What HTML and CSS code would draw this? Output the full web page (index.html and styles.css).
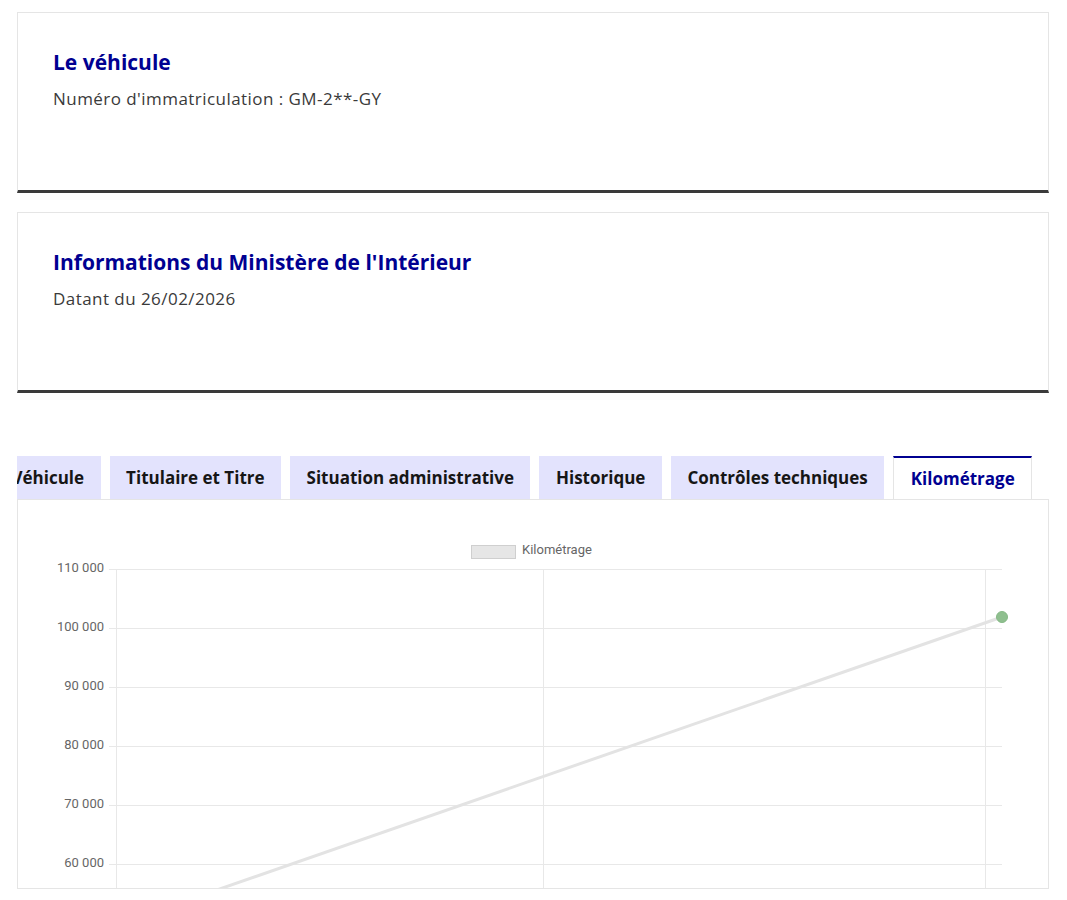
FILE: index.html
```html
<!DOCTYPE html>
<html lang="fr">
<head>
<meta charset="utf-8">
<title>Kilométrage</title>
<link rel="stylesheet" href="styles.css">
</head>
<body>
<main class="page">
  <section class="card">
    <h2 class="card-title">Le véhicule</h2>
    <p class="card-desc">Numéro d'immatriculation : GM-2**-GY</p>
  </section>
  <section class="card">
    <h2 class="card-title">Informations du Ministère de l'Intérieur</h2>
    <p class="card-desc">Datant du 26/02/2026</p>
  </section>

  <div class="tabs">
    <div class="tab-scroll">
      <ul class="tab-list">
        <li class="tab">Véhicule</li>
        <li class="tab">Titulaire et Titre</li>
        <li class="tab">Situation administrative</li>
        <li class="tab">Historique</li>
        <li class="tab">Contrôles techniques</li>
        <li class="tab tab-active">Kilométrage</li>
      </ul>
    </div>
    <div class="tab-panel">
      <svg class="chart" width="1031" height="388" viewBox="0 0 1031 388" xmlns="http://www.w3.org/2000/svg">
        <g class="legend">
          <rect x="453.5" y="45.5" width="44" height="13" fill="#e6e6e6" stroke="#cfcfcf" stroke-width="1"/>
          <text x="504" y="51" class="legend-text" dominant-baseline="middle">Kilométrage</text>
        </g>
        <g stroke="#e8e8e8" stroke-width="1">
          <line x1="91" y1="69.5" x2="984" y2="69.5"/>
          <line x1="91" y1="128.5" x2="984" y2="128.5"/>
          <line x1="91" y1="187.5" x2="984" y2="187.5"/>
          <line x1="91" y1="246.5" x2="984" y2="246.5"/>
          <line x1="91" y1="305.5" x2="984" y2="305.5"/>
          <line x1="91" y1="364.5" x2="984" y2="364.5"/>
          <line x1="98.5" y1="69" x2="98.5" y2="388"/>
          <line x1="525.5" y1="69" x2="525.5" y2="388"/>
          <line x1="967.5" y1="69" x2="967.5" y2="388"/>
        </g>
        <g class="axis" text-anchor="end">
          <text x="86" y="69" dominant-baseline="middle">110 000</text>
          <text x="86" y="128" dominant-baseline="middle">100 000</text>
          <text x="86" y="187" dominant-baseline="middle">90 000</text>
          <text x="86" y="246" dominant-baseline="middle">80 000</text>
          <text x="86" y="305" dominant-baseline="middle">70 000</text>
          <text x="86" y="364" dominant-baseline="middle">60 000</text>
        </g>
        <line x1="170" y1="400" x2="984" y2="117" stroke="#e3e3e3" stroke-width="3"/>
        <circle cx="984" cy="117" r="5.5" fill="#8fbf8f" stroke="#86b986" stroke-width="1"/>
      </svg>
    </div>
  </div>
</main>
</body>
</html>
```

FILE: styles.css
```css
* { box-sizing: border-box; }

html, body {
  margin: 0;
  padding: 0;
  background: #ffffff;
}

body {
  font-family: "Open Sans", "Noto Sans", "Liberation Sans", sans-serif;
  color: #3a3a3a;
}

.page {
  padding: 12px 18px 0 17px;
}

.card {
  border: 1px solid #e5e5e5;
  border-bottom: 3px solid #3a3a3a;
  padding: 35px 35px 79px 35px;
  margin-bottom: 19px;
}

.card-title {
  margin: 0;
  font-size: 21px;
  line-height: 28px;
  font-weight: 700;
  color: #000091;
}

.card-desc {
  margin: 11px 0 0 0;
  font-size: 17px;
  line-height: 24px;
  letter-spacing: 0.45px;
  color: #3a3a3a;
}

.tabs {
  margin-top: 63px;
}

.tab-scroll {
  overflow: hidden;
}

.tab-list {
  list-style: none;
  margin: 0 0 0 -22px;
  padding: 0;
  display: flex;
  gap: 9px;
  white-space: nowrap;
}

.tab {
  flex: none;
  height: 43px;
  padding: 0 16.5px;
  display: flex;
  align-items: center;
  background: #e3e3fd;
  font-size: 17px;
  font-weight: 700;
  color: #161616;
}

.tab-active {
  background: #ffffff;
  color: #000091;
  border-top: 2px solid #000091;
  border-left: 1px solid #e5e5e5;
  border-right: 1px solid #e5e5e5;
}

.tab-panel {
  border: 1px solid #e5e5e5;
  height: 390px;
  overflow: hidden;
}

.chart {
  display: block;
}

.chart text {
  font-family: "Roboto", "Liberation Sans", sans-serif;
  font-size: 13px;
  fill: #666666;
}
```
